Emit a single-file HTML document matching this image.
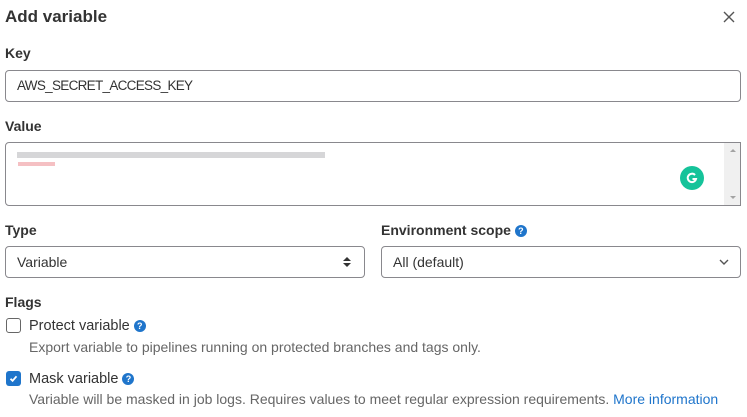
<!DOCTYPE html>
<html><head><meta charset="utf-8"><style>
*{box-sizing:border-box;margin:0;padding:0}
body{width:747px;height:417px;background:#fff;font-family:"Liberation Sans",sans-serif;color:#303030;position:relative;overflow:hidden;font-size:14px}
.a{position:absolute;white-space:nowrap}
.lbl{font-weight:bold;font-size:14px;color:#333}
.box{position:absolute;border:1px solid #89888d;border-radius:4px;background:#fff}
.q{display:inline-block;width:12px;height:12px;border-radius:50%;background:#1f75cb;color:#fff;font-size:9px;font-weight:bold;text-align:center;line-height:12px;vertical-align:1px;margin-left:4px}
.desc{color:#666;font-size:14px}
</style></head><body>
<div class="a" style="left:5px;top:7px;font-size:17px;font-weight:bold;color:#333">Add variable</div>
<svg class="a" style="left:723px;top:11px" width="12" height="12" viewBox="0 0 12 12"><path d="M1 1L11 11M11 1L1 11" stroke="#555" stroke-width="1.4"/></svg>
<div class="a lbl" style="left:5px;top:45px">Key</div>
<div class="box" style="left:5px;top:70px;width:736px;height:32px"></div>
<div class="a" style="left:17px;top:78px;color:#333;font-size:13.5px;letter-spacing:-0.7px">AWS_SECRET_ACCESS_KEY</div>
<div class="a lbl" style="left:5px;top:118px">Value</div>
<div class="box" style="left:5px;top:142px;width:736px;height:64px;border-radius:4px 0 0 4px"></div>
<div class="a" style="left:724px;top:143px;width:16px;height:62px;background:#f0f0f0"></div>
<div class="a" style="left:730px;top:149px;width:0;height:0;border:3px solid transparent;border-bottom-color:#a3a3a3;border-top:0"></div>
<div class="a" style="left:730px;top:196px;width:0;height:0;border:3px solid transparent;border-top-color:#a3a3a3;border-bottom:0"></div>
<div class="a" style="left:17px;top:152px;width:308px;height:6px;background:#d6d6d8"></div>
<div class="a" style="left:18px;top:162px;width:37px;height:4px;background:#f5c0c3"></div>
<div class="a" style="left:680px;top:166px;width:24px;height:24px;border-radius:50%;background:#15c39a"></div>
<svg class="a" style="left:684px;top:170px" width="16" height="16" viewBox="0 0 16 16"><path d="M11 5A4.2 4.2 0 1 0 12 9H8.5" stroke="#fff" stroke-width="2" fill="none"/></svg>
<div class="a lbl" style="left:5px;top:222px">Type</div>
<div class="box" style="left:5px;top:246px;width:360px;height:32px"></div>
<div class="a" style="left:17px;top:254px;color:#333">Variable</div>
<svg class="a" style="left:343px;top:256px" width="8" height="12" viewBox="0 0 8 12"><path d="M0 5L4 1L8 5ZM0 7L4 11L8 7Z" fill="#333"/></svg>
<div class="a lbl" style="left:381px;top:222px">Environment scope<span class="q">?</span></div>
<div class="box" style="left:381px;top:246px;width:360px;height:32px"></div>
<div class="a" style="left:393px;top:254px;color:#333">All (default)</div>
<svg class="a" style="left:719px;top:259px" width="10" height="6" viewBox="0 0 10 6"><path d="M1 1L5 5L9 1" stroke="#555" stroke-width="1.4" fill="none"/></svg>
<div class="a lbl" style="left:5px;top:294px">Flags</div>
<div class="a" style="left:6px;top:318px;width:15px;height:15px;border:1px solid #666;border-radius:3px"></div>
<div class="a" style="left:29px;top:318px;color:#333;font-size:14.5px">Protect variable<span class="q">?</span></div>
<div class="a desc" style="left:29px;top:339px">Export variable to pipelines running on protected branches and tags only.</div>
<div class="a" style="left:6px;top:371px;width:15px;height:15px;background:#1f75cb;border-radius:3px"></div>
<svg class="a" style="left:8px;top:373px" width="11" height="11" viewBox="0 0 11 11"><path d="M2.5 5.8L4.6 7.8L8.5 3.3" stroke="#fff" stroke-width="1.8" fill="none"/></svg>
<div class="a" style="left:29px;top:371px;color:#333;font-size:14.5px">Mask variable<span class="q">?</span></div>
<div class="a desc" style="left:29px;top:391px">Variable will be masked in job logs. Requires values to meet regular expression requirements. <span style="color:#1f75cb">More information</span></div>
</body></html>
